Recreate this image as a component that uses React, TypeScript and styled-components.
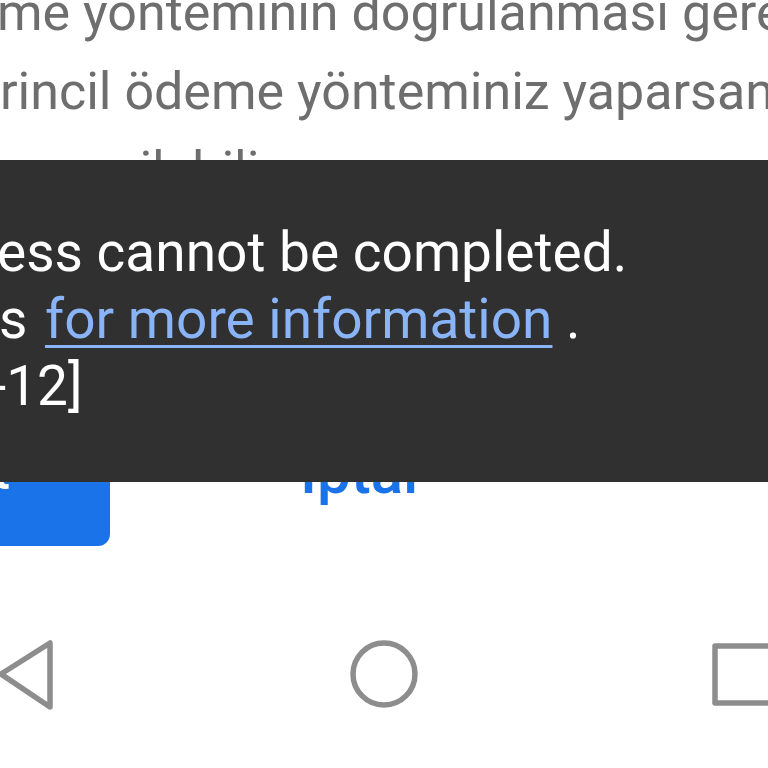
import React from "react";
import styled, { createGlobalStyle } from "styled-components";

const GlobalStyle = createGlobalStyle`
  html, body {
    margin: 0;
    padding: 0;
    background: #ffffff;
  }
  body {
    font-family: Roboto, "Noto Sans", "Liberation Sans", sans-serif;
  }
`;

const App = () => {
  return (
    <>
      <GlobalStyle />
      <Screen>
        <Message>
          <Line shift={-3}>me yönteminin doğrulanması gerekiyor.</Line>
          <Line shift={0}>rincil ödeme yönteminiz yaparsanız</Line>
          <Line shift={4}>ve verilebilir.</Line>
        </Message>

        <Actions>
          <PrimaryButton>Devam et</PrimaryButton>
          <TextButton>İptal</TextButton>
        </Actions>

        <NavBar>
          <NavIcon width="64" height="72" viewBox="0 0 64 72">
            <polygon points="3,36 52,5 52,69" />
          </NavIcon>
          <NavIcon width="72" height="72" viewBox="0 0 72 72">
            <circle cx="36" cy="36" r="31" />
          </NavIcon>
          <NavIcon width="66" height="64" viewBox="0 0 66 64">
            <rect x="9" y="4" width="58" height="57" />
          </NavIcon>
        </NavBar>

        <Snackbar role="alert">
          <SnackLine shift={-3}>ess cannot be completed.</SnackLine>
          <SnackLine shift={-1}>
            s <SnackLink href="#">for more information</SnackLink> .
          </SnackLine>
          <SnackLine shift={-9}>-12]</SnackLine>
        </Snackbar>
      </Screen>
    </>
  );
};

const Screen = styled.div`
  position: relative;
  width: 768px;
  height: 768px;
  overflow: hidden;
  background: #ffffff;
  display: flex;
  flex-direction: column;
`;

const Message = styled.div`
  margin-top: -27px;
  font-size: 52px;
  line-height: 79px;
  color: #6e6e6e;
`;

const Line = styled.div<{ shift: number }>`
  white-space: nowrap;
  margin-left: ${(p) => p.shift}px;
`;

const Actions = styled.div`
  display: flex;
  align-items: center;
  height: 148px;
  margin-top: 188px;
  flex-shrink: 0;
`;

const PrimaryButton = styled.button`
  flex-shrink: 0;
  width: 410px;
  height: 148px;
  margin-left: -300px;
  border: none;
  border-radius: 12px;
  background: #1a73e8;
  color: #ffffff;
  font-family: Roboto, sans-serif;
  font-size: 50px;
  font-weight: 500;
  white-space: nowrap;
`;

const TextButton = styled.button`
  margin-left: 190px;
  padding: 0;
  border: none;
  background: transparent;
  color: #1a73e8;
  font-family: Roboto, sans-serif;
  font-size: 60px;
  font-weight: 500;
`;

const NavBar = styled.div`
  display: flex;
  justify-content: space-between;
  align-items: center;
  height: 128px;
  width: 774px;
  margin: 64px 0 0 -2px;
  flex-shrink: 0;
`;

const NavIcon = styled.svg`
  flex-shrink: 0;
  fill: none;
  stroke: #8d8d8d;
  stroke-width: 5.5;
  stroke-linejoin: round;
`;

const Snackbar = styled.div`
  position: absolute;
  top: 160px;
  left: 0;
  right: 0;
  height: 322px;
  box-sizing: border-box;
  padding-top: 59px;
  background: #303030;
  color: #ffffff;
  font-size: 55px;
  line-height: 67px;
`;

const SnackLine = styled.div<{ shift: number }>`
  white-space: nowrap;
  margin-left: ${(p) => p.shift}px;
`;

const SnackLink = styled.a`
  margin-left: 4px;
  color: #8ab4f8;
  text-decoration: underline;
  text-decoration-thickness: 3px;
  text-underline-offset: 7px;
`;

export default App;
